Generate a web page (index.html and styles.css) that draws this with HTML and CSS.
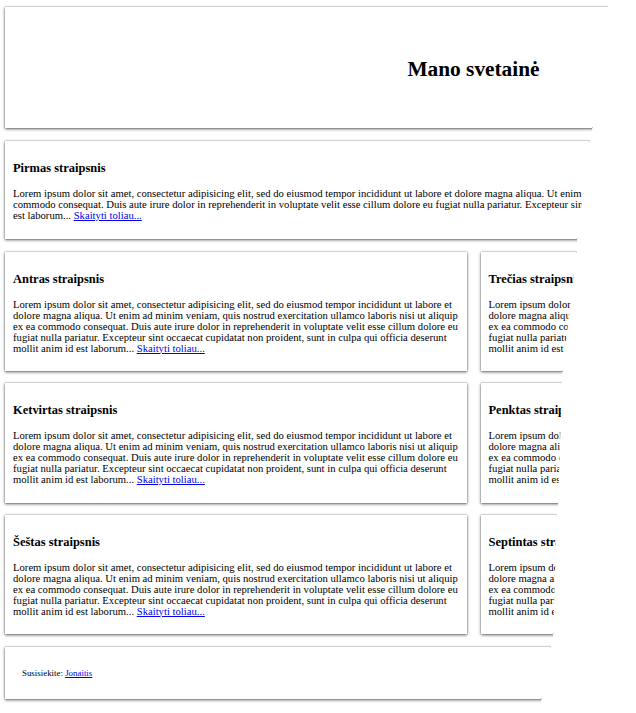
FILE: index.html
```html
<!DOCTYPE html>
<html lang="lt">
<head>
<meta charset="utf-8">
<title>Mano svetainė</title>
<link rel="stylesheet" href="styles.css">
</head>
<body>
<div class="page">
  <header class="box site-header">
    <h1 class="site-title">Mano svetainė</h1>
  </header>

  <article class="box article">
    <h3 class="article-title">Pirmas straipsnis</h3>
    <p class="article-text">Lorem ipsum dolor sit amet, consectetur adipisicing elit, sed do eiusmod tempor incididunt ut labore et dolore magna aliqua. Ut enim ad minim veniam, quis nostrud exercitation ullamco laboris nisi ut aliquip ex ea commodo consequat. Duis aute irure dolor in reprehenderit in voluptate velit esse cillum dolore eu fugiat nulla pariatur. Excepteur sint occaecat cupidatat non proident, sunt in culpa qui officia deserunt mollit anim id est laborum... <a href="#">Skaityti toliau...</a></p>
  </article>

  <div class="grid">
    <article class="box article">
      <h3 class="article-title">Antras straipsnis</h3>
      <p class="article-text">Lorem ipsum dolor sit amet, consectetur adipisicing elit, sed do eiusmod tempor incididunt ut labore et dolore magna aliqua. Ut enim ad minim veniam, quis nostrud exercitation ullamco laboris nisi ut aliquip ex ea commodo consequat. Duis aute irure dolor in reprehenderit in voluptate velit esse cillum dolore eu fugiat nulla pariatur. Excepteur sint occaecat cupidatat non proident, sunt in culpa qui officia deserunt mollit anim id est laborum... <a href="#">Skaityti toliau...</a></p>
    </article>
    <article class="box article">
      <h3 class="article-title">Trečias straipsnis</h3>
      <p class="article-text">Lorem ipsum dolor sit amet, consectetur adipisicing elit, sed do eiusmod tempor incididunt ut labore et dolore magna aliqua. Ut enim ad minim veniam, quis nostrud exercitation ullamco laboris nisi ut aliquip ex ea commodo consequat. Duis aute irure dolor in reprehenderit in voluptate velit esse cillum dolore eu fugiat nulla pariatur. Excepteur sint occaecat cupidatat non proident, sunt in culpa qui officia deserunt mollit anim id est laborum... <a href="#">Skaityti toliau...</a></p>
    </article>
    <article class="box article">
      <h3 class="article-title">Ketvirtas straipsnis</h3>
      <p class="article-text">Lorem ipsum dolor sit amet, consectetur adipisicing elit, sed do eiusmod tempor incididunt ut labore et dolore magna aliqua. Ut enim ad minim veniam, quis nostrud exercitation ullamco laboris nisi ut aliquip ex ea commodo consequat. Duis aute irure dolor in reprehenderit in voluptate velit esse cillum dolore eu fugiat nulla pariatur. Excepteur sint occaecat cupidatat non proident, sunt in culpa qui officia deserunt mollit anim id est laborum... <a href="#">Skaityti toliau...</a></p>
    </article>
    <article class="box article">
      <h3 class="article-title">Penktas straipsnis</h3>
      <p class="article-text">Lorem ipsum dolor sit amet, consectetur adipisicing elit, sed do eiusmod tempor incididunt ut labore et dolore magna aliqua. Ut enim ad minim veniam, quis nostrud exercitation ullamco laboris nisi ut aliquip ex ea commodo consequat. Duis aute irure dolor in reprehenderit in voluptate velit esse cillum dolore eu fugiat nulla pariatur. Excepteur sint occaecat cupidatat non proident, sunt in culpa qui officia deserunt mollit anim id est laborum... <a href="#">Skaityti toliau...</a></p>
    </article>
    <article class="box article">
      <h3 class="article-title">Šeštas straipsnis</h3>
      <p class="article-text">Lorem ipsum dolor sit amet, consectetur adipisicing elit, sed do eiusmod tempor incididunt ut labore et dolore magna aliqua. Ut enim ad minim veniam, quis nostrud exercitation ullamco laboris nisi ut aliquip ex ea commodo consequat. Duis aute irure dolor in reprehenderit in voluptate velit esse cillum dolore eu fugiat nulla pariatur. Excepteur sint occaecat cupidatat non proident, sunt in culpa qui officia deserunt mollit anim id est laborum... <a href="#">Skaityti toliau...</a></p>
    </article>
    <article class="box article">
      <h3 class="article-title">Septintas straipsnis</h3>
      <p class="article-text">Lorem ipsum dolor sit amet, consectetur adipisicing elit, sed do eiusmod tempor incididunt ut labore et dolore magna aliqua. Ut enim ad minim veniam, quis nostrud exercitation ullamco laboris nisi ut aliquip ex ea commodo consequat. Duis aute irure dolor in reprehenderit in voluptate velit esse cillum dolore eu fugiat nulla pariatur. Excepteur sint occaecat cupidatat non proident, sunt in culpa qui officia deserunt mollit anim id est laborum... <a href="#">Skaityti toliau...</a></p>
    </article>
  </div>

  <footer class="box site-footer">
    <p class="footer-text">Susisiekite: <a href="#">Jonaitis</a></p>
  </footer>
</div>
</body>
</html>
```

FILE: styles.css
```css
html, body {
  margin: 0;
  padding: 0;
  overflow: hidden;
  background: #ffffff;
}

body {
  font-family: "Liberation Serif", "Times New Roman", serif;
  font-size: 10.67px;
  line-height: 11px;
  color: #000000;
}

a {
  color: #0000ee;
  text-decoration: underline;
}

.page {
  width: 937px;
  padding: 7px 5px 20px 5px;
  display: flex;
  flex-direction: column;
  gap: 13px;
  clip-path: polygon(0 0, 609px 0, 608px 7px, 592px 130px, 590px 139px, 577px 240px, 577px 249px, 562px 375px, 562px 381px, 558px 505px, 557px 514px, 553px 638px, 551px 645px, 541px 702px, 541px 713px, 0 713px);
}

.box {
  background: #ffffff;
  box-shadow: 0 0 1px rgba(0, 0, 0, 0.5), 0 1px 3px rgba(0, 0, 0, 0.6);
}

.site-header {
  height: 121px;
  display: flex;
  align-items: center;
  justify-content: center;
}

.site-title {
  margin: 4px 0 0 0;
  font-size: 21.33px;
  line-height: 25px;
  font-weight: bold;
}

.article {
  padding: 8px;
}

.article-title {
  margin: 12px 0 13px 0;
  font-size: 12.48px;
  line-height: 14px;
  font-weight: bold;
}

.article-text {
  margin: 0 0 9.5px 0;
}

.grid {
  display: grid;
  grid-template-columns: 1fr 1fr;
  column-gap: 14px;
  row-gap: 12px;
}

.site-footer {
  height: 52px;
  padding: 0 17px;
  display: flex;
  align-items: center;
}

.footer-text {
  margin: 0;
  font-size: 8.9px;
  line-height: 11px;
}
```
